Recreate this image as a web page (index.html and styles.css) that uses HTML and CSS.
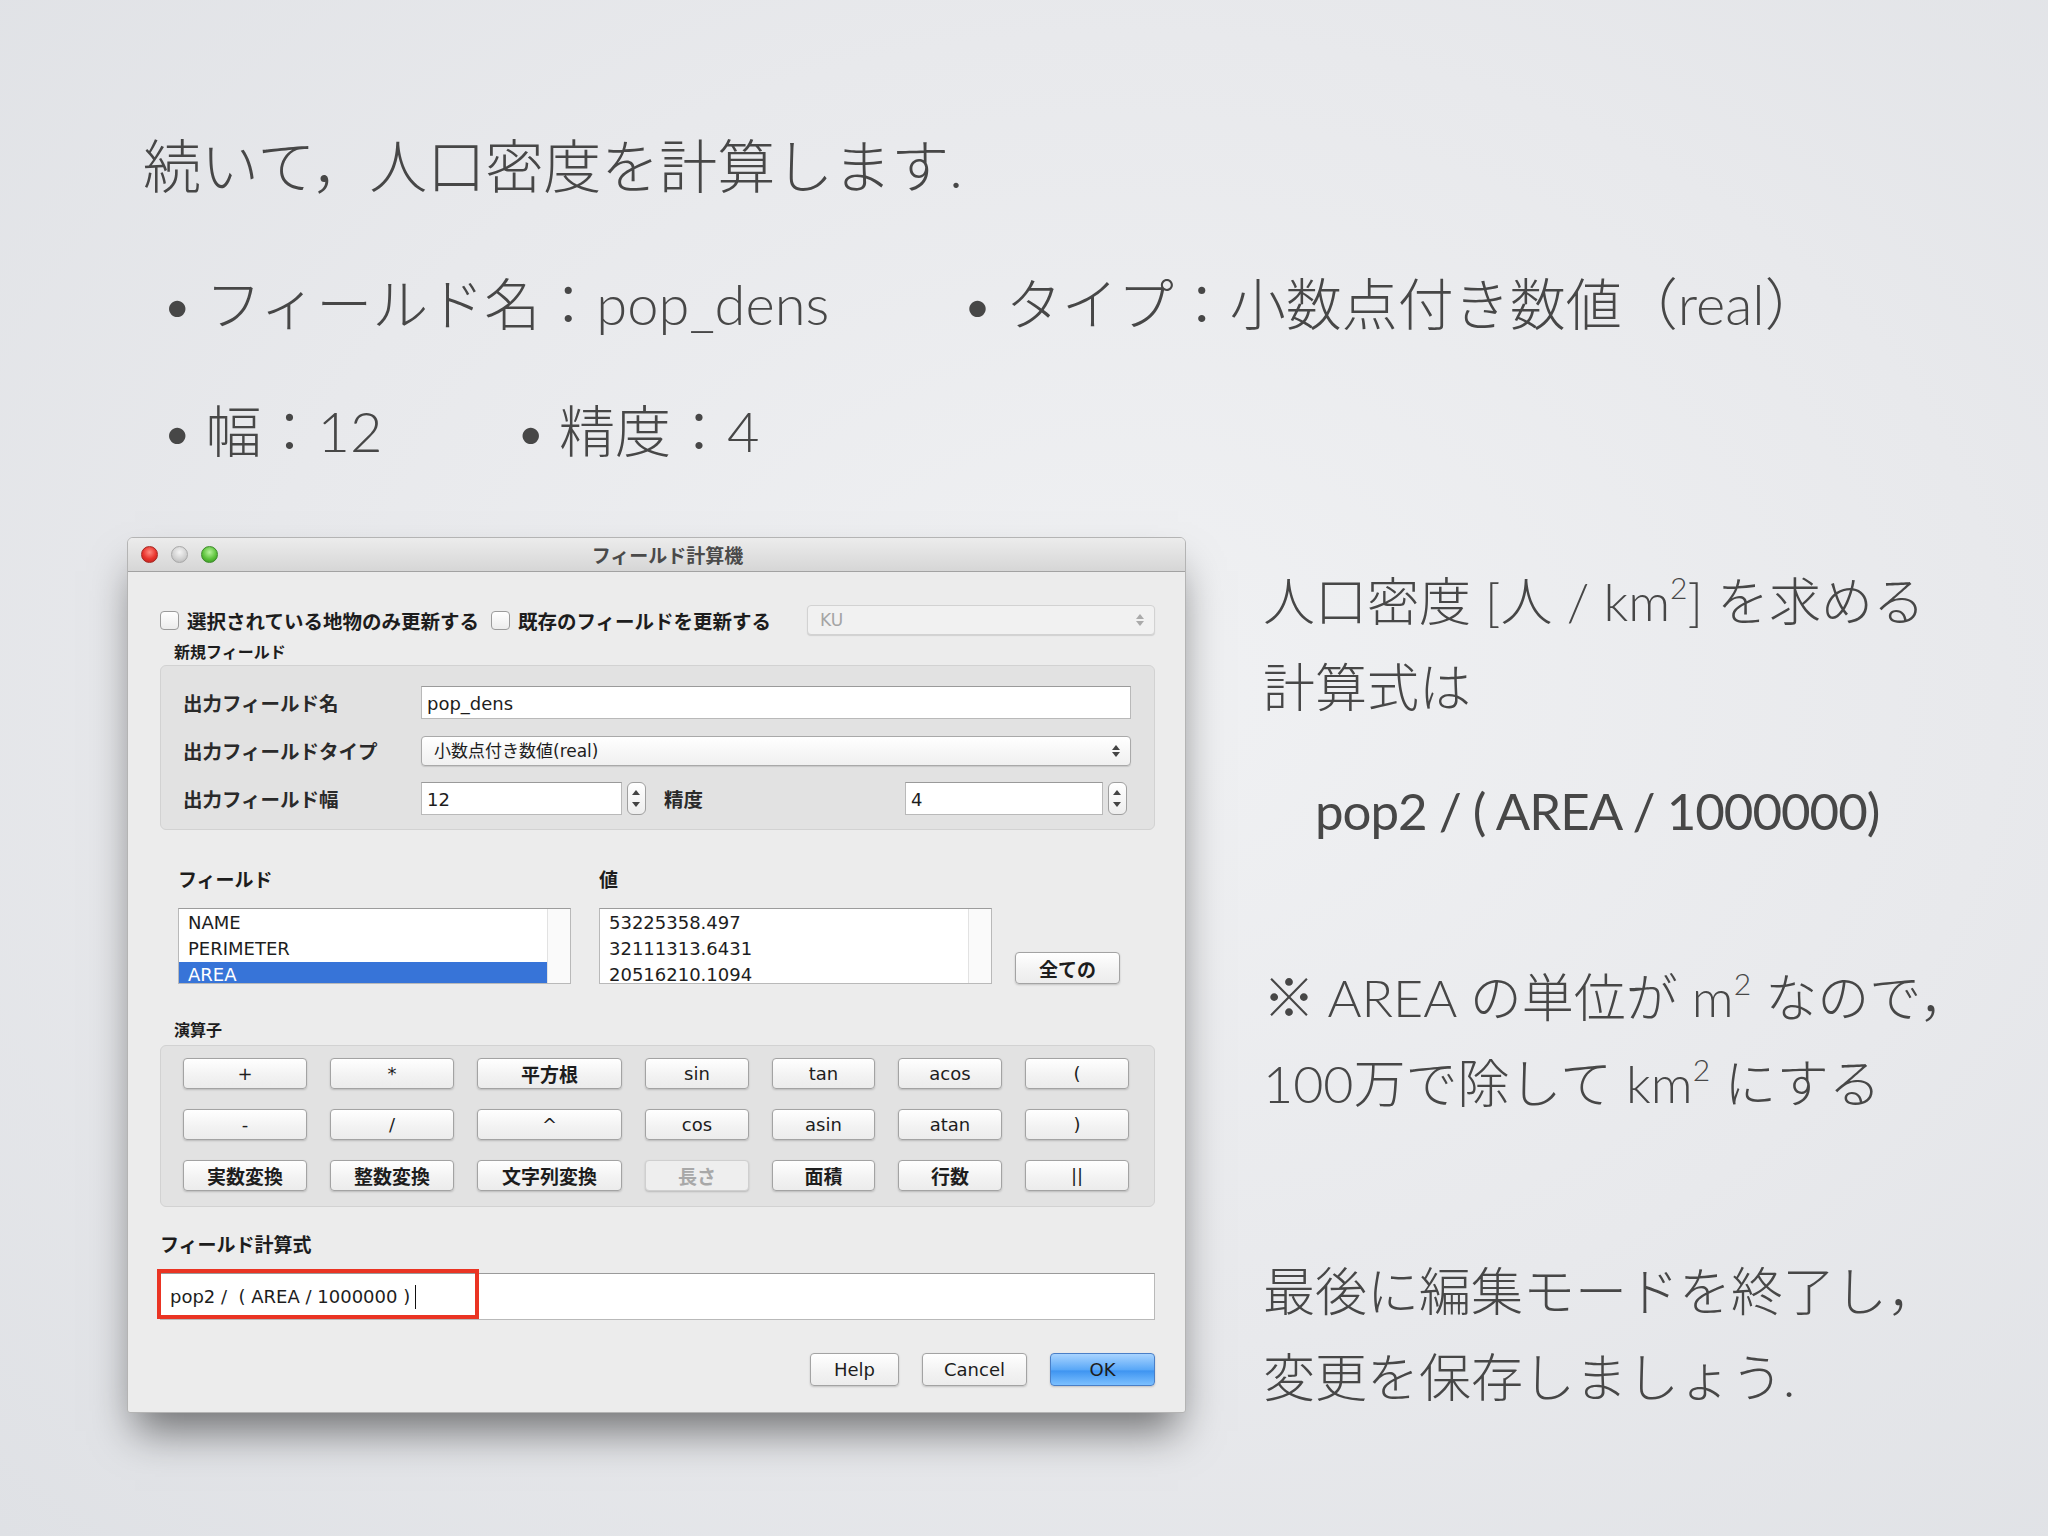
FILE: index.html
```html
<!DOCTYPE html>
<html lang="ja">

<head>
    <meta charset="UTF-8">
    <meta name="viewport" content="width=device-width, initial-scale=1.0">
    <title>フィールド計算機</title>
    <link rel="stylesheet" href="styles.css">
</head>

<body>
    <div class="slide">
        <h1 class="title">続いて，人口密度を計算します.</h1>

        <ul class="points first">
            <li>フィールド名：pop_dens</li>
            <li>タイプ：小数点付き数値（real）</li>
        </ul>
        <ul class="points second">
            <li>幅：12</li>
            <li>精度：4</li>
        </ul>

        <div class="main">
            <!-- dialog -->
            <div class="dialog">
                <div class="titlebar">
                    <div class="lights">
                        <span class="light red"></span>
                        <span class="light gray"></span>
                        <span class="light green"></span>
                    </div>
                    <span class="wintitle">フィールド計算機</span>
                </div>

                <div class="body">
                    <div class="checks">
                        <label class="check"><span class="box"></span>選択されている地物のみ更新する</label>
                        <label class="check"><span class="box"></span>既存のフィールドを更新する</label>
                        <div class="combo disabled">KU<span class="arrows"></span></div>
                    </div>

                    <h6 class="caption">新規フィールド</h6>
                    <div class="group newfield">
                        <div class="row">
                            <span class="lbl">出力フィールド名</span>
                            <div class="input wide">pop_dens</div>
                        </div>
                        <div class="row">
                            <span class="lbl">出力フィールドタイプ</span>
                            <div class="combo wide">小数点付き数値(real)<span class="arrows"></span></div>
                        </div>
                        <div class="row">
                            <span class="lbl">出力フィールド幅</span>
                            <div class="spin">
                                <div class="input">12</div>
                                <span class="stepper"></span>
                            </div>
                            <span class="lbl short">精度</span>
                            <div class="spin right">
                                <div class="input">4</div>
                                <span class="stepper"></span>
                            </div>
                        </div>
                    </div>

                    <div class="lists">
                        <div class="listcol">
                            <h6 class="caption plain">フィールド</h6>
                            <div class="list">
                                <ul>
                                    <li>NAME</li>
                                    <li>PERIMETER</li>
                                    <li class="selected">AREA</li>
                                </ul>
                                <span class="scroll"></span>
                            </div>
                        </div>
                        <div class="listcol">
                            <h6 class="caption plain">値</h6>
                            <div class="list">
                                <ul>
                                    <li>53225358.497</li>
                                    <li>32111313.6431</li>
                                    <li>20516210.1094</li>
                                </ul>
                                <span class="scroll"></span>
                            </div>
                        </div>
                        <button class="btn all jp">全ての</button>
                    </div>

                    <h6 class="caption ops-cap">演算子</h6>
                    <div class="group ops">
                        <button class="btn">+</button>
                        <button class="btn">*</button>
                        <button class="btn jp">平方根</button>
                        <button class="btn">sin</button>
                        <button class="btn">tan</button>
                        <button class="btn">acos</button>
                        <button class="btn">(</button>

                        <button class="btn">-</button>
                        <button class="btn">/</button>
                        <button class="btn">^</button>
                        <button class="btn">cos</button>
                        <button class="btn">asin</button>
                        <button class="btn">atan</button>
                        <button class="btn">)</button>

                        <button class="btn jp">実数変換</button>
                        <button class="btn jp">整数変換</button>
                        <button class="btn jp">文字列変換</button>
                        <button class="btn jp off">長さ</button>
                        <button class="btn jp">面積</button>
                        <button class="btn jp">行数</button>
                        <button class="btn">||</button>
                    </div>

                    <h6 class="caption expr-cap">フィールド計算式</h6>
                    <div class="expr">
                        <span>pop2 /&nbsp; ( AREA / 1000000 )</span><span class="caret"></span>
                        <div class="mark"></div>
                    </div>

                    <div class="actions">
                        <button class="btn">Help</button>
                        <button class="btn">Cancel</button>
                        <button class="btn ok">OK</button>
                    </div>
                </div>
            </div>

            <div class="notes">
                <p>人口密度 [人 / km<sup>2</sup>] を求める</p>
                <p>計算式は</p>
                <p class="formula">pop2 / ( AREA / 1000000)</p>
                <p class="gap1">※ AREA の単位が m<sup>2</sup> なので，</p>
                <p>100万で除して km<sup>2</sup> にする</p>
                <p class="gap2">最後に編集モードを終了し，</p>
                <p>変更を保存しましょう.</p>
            </div>
        </div>
    </div>
</body>

</html>
```

FILE: styles.css
```css
* {
    margin: 0;
    padding: 0;
    list-style: none;
    box-sizing: border-box;
}

body {
    width: 2048px;
    height: 1536px;
    overflow: hidden;
    background: radial-gradient(ellipse at 55% 45%, #f0f1f3 0%, #e8e9ec 55%, #dfe1e5 100%);
    font-family: Lato, "Noto Sans CJK JP", sans-serif;
    font-weight: 300;
    color: #474747;
}

.slide {
    padding: 131px 0 0 127px;
}

.title {
    font-size: 58px;
    font-weight: 300;
    line-height: 70px;
    margin-left: 16px;
}

.points {
    display: flex;
    gap: 132px;
    font-size: 56px;
    line-height: 70px;
    margin-left: 34px;
}

.points li::before {
    content: "•";
    margin-right: 12px;
}

.points.first {
    margin-top: 68px;
}

.points.second {
    margin-top: 57px;
}

.main {
    display: flex;
    align-items: flex-start;
    gap: 77px;
    margin-top: 71px;
}

/* ---------- dialog ---------- */

.dialog {
    width: 1059px;
    height: 876px;
    background-color: #ececec;
    border-radius: 6px 6px 3px 3px;
    border: 1px solid #b4b4b4;
    box-shadow: 0 26px 40px -8px rgba(0, 0, 0, 0.5);
    font-family: "DejaVu Sans", "Noto Sans CJK JP", sans-serif;
    font-weight: 400;
    font-size: 18px;
    color: #1d1d1d;
    overflow: hidden;
}

.titlebar {
    height: 34px;
    background: linear-gradient(#ececec, #d6d6d6);
    border-bottom: 1px solid #a2a2a2;
    display: flex;
    align-items: center;
    position: relative;
}

.lights {
    display: flex;
    gap: 13px;
    padding-left: 13px;
}

.light {
    width: 17px;
    height: 17px;
    border-radius: 50%;
    display: block;
}

.light.red {
    background: radial-gradient(circle at 50% 35%, #ff8a80 0%, #e8312a 55%, #b3221d 100%);
    border: 1px solid #a52620;
}

.light.gray {
    background: radial-gradient(circle at 50% 35%, #f4f4f4 0%, #cfcfcf 60%, #b0b0b0 100%);
    border: 1px solid #a8a8a8;
}

.light.green {
    background: radial-gradient(circle at 50% 35%, #b6f29b 0%, #5cc23a 55%, #2f8c1d 100%);
    border: 1px solid #3c8a2a;
}

.wintitle {
    position: absolute;
    left: 22px;
    right: 0;
    text-align: center;
    font-size: 19px;
    font-weight: 700;
    color: #4a4a4a;
}

.body {
    padding: 0 30px 0 32px;
}

.checks {
    display: flex;
    align-items: center;
    height: 30px;
    margin-top: 33px;
}

.check {
    display: flex;
    align-items: center;
    font-weight: 700;
    font-size: 19.5px;
    margin-right: 12px;
}

.box {
    width: 19px;
    height: 19px;
    border: 1px solid #9b9b9b;
    border-radius: 4px;
    background: linear-gradient(#ffffff, #ececec);
    margin-right: 8px;
    display: block;
}

.combo {
    position: relative;
    height: 30px;
    line-height: 28px;
    padding-left: 12px;
    background: linear-gradient(#ffffff, #f0f0f0);
    border: 1px solid #a9a9a9;
    border-radius: 4px;
    box-shadow: 0 1px 1px rgba(0, 0, 0, 0.12);
    font-size: 17px;
}

.combo.disabled {
    margin-left: auto;
    width: 348px;
    color: #a4a4a4;
    border-color: #d2d2d2;
    background: #f1f1f1;
}

.arrows {
    position: absolute;
    right: 10px;
    top: 8px;
    width: 0;
    height: 12px;
    border-left: 4px solid transparent;
    border-right: 4px solid transparent;
}

.arrows::before,
.arrows::after {
    content: "";
    position: absolute;
    left: -4px;
    border-left: 4px solid transparent;
    border-right: 4px solid transparent;
}

.arrows::before {
    top: 0;
    border-bottom: 5px solid #444;
}

.arrows::after {
    bottom: 0;
    border-top: 5px solid #444;
}

.disabled .arrows::before {
    border-bottom-color: #aaa;
}

.disabled .arrows::after {
    border-top-color: #aaa;
}

.caption {
    font-size: 16px;
    font-weight: 700;
    margin: 6px 0 0 14px;
    line-height: 24px;
}

.caption.plain {
    margin: 0 0 16px 0;
    font-size: 19px;
}

.caption.ops-cap {
    margin-top: 35px;
}

.group {
    background-color: #e2e2e2;
    border: 1px solid #d2d2d2;
    border-radius: 6px;
}

.newfield {
    padding: 20px 23px 14px 22px;
    display: flex;
    flex-direction: column;
    gap: 15px;
}

.row {
    display: flex;
    align-items: center;
    height: 33px;
}

.lbl {
    width: 238px;
    font-weight: 700;
    font-size: 19.5px;
    color: #2a2a2a;
}

.lbl.short {
    width: 241px;
    margin-left: 18px;
}

.input {
    height: 33px;
    line-height: 33px;
    padding-left: 5px;
    background-color: #fff;
    border: 1px solid #b9b9b9;
    border-top-color: #9a9a9a;
    font-size: 18px;
}

.wide {
    flex: 1;
}

.combo.wide {
    height: 30px;
    line-height: 28px;
    padding-left: 12px;
}

.spin {
    display: flex;
    align-items: center;
    gap: 5px;
}

.spin .input {
    width: 201px;
}

.spin.right .input {
    width: 198px;
}

.stepper {
    position: relative;
    width: 19px;
    height: 33px;
    border: 1px solid #9f9f9f;
    border-radius: 6px;
    background: linear-gradient(#ffffff, #eeeeee);
    display: block;
}

.stepper::before,
.stepper::after {
    content: "";
    position: absolute;
    left: 4px;
    border-left: 4px solid transparent;
    border-right: 4px solid transparent;
}

.stepper::before {
    top: 7px;
    border-bottom: 5px solid #444;
}

.stepper::after {
    bottom: 7px;
    border-top: 5px solid #444;
}

.lists {
    display: flex;
    align-items: flex-end;
    gap: 28px;
    margin: 38px 0 0 18px;
}

.list {
    position: relative;
    width: 393px;
    height: 76px;
    background-color: #fff;
    border: 1px solid #b9b9b9;
    border-top-color: #9c9c9c;
    overflow: hidden;
}

.list ul {
    padding-top: 1px;
    margin-right: 23px;
}

.list li {
    line-height: 26px;
    height: 26px;
    padding-left: 9px;
    font-size: 18px;
}

.list li.selected {
    background-color: #3774d8;
    color: #fff;
}

.scroll {
    position: absolute;
    top: 0;
    right: 0;
    width: 23px;
    height: 100%;
    border-left: 1px solid #e2e2e2;
    background-color: #fafafa;
}

.btn {
    font-family: "DejaVu Sans", "Noto Sans CJK JP", sans-serif;
    font-size: 18px;
    color: #1d1d1d;
    height: 31px;
    background: linear-gradient(#ffffff, #f2f2f2 60%, #ececec);
    border: 1px solid #a3a3a3;
    border-radius: 4px;
    box-shadow: 0 1px 2px rgba(0, 0, 0, 0.18);
}

.btn.jp {
    font-weight: 700;
    font-size: 19px;
}

.btn.off {
    color: #a8a8a8;
    border-color: #cfcfcf;
    background: #eeeeee;
}

.btn.all {
    width: 105px;
    height: 32px;
    margin-left: -5px;
}

.ops {
    margin-top: 2px;
    padding: 12px 23px 15px 22px;
    display: grid;
    grid-template-columns: 124px 124px 145px 104px 103px 104px 104px;
    column-gap: 23px;
    row-gap: 20px;
}

.expr-cap {
    margin: 26px 0 16px 0;
    font-size: 19px;
}

.expr {
    position: relative;
    height: 47px;
    background-color: #fff;
    border: 1px solid #b9b9b9;
    border-top-color: #9a9a9a;
    display: flex;
    align-items: center;
    padding-left: 9px;
    font-size: 18px;
}

.caret {
    width: 1px;
    height: 24px;
    background-color: #111;
    margin-left: 5px;
    display: block;
}

.mark {
    position: absolute;
    left: -4px;
    top: -5px;
    width: 322px;
    height: 50px;
    border: 4px solid #ea3423;
}

.actions {
    display: flex;
    justify-content: flex-end;
    gap: 23px;
    margin-top: 33px;
}

.actions .btn {
    height: 33px;
    width: 105px;
}

.actions .btn:first-child {
    width: 89px;
}

.btn.ok {
    background: linear-gradient(#a9d4ff, #5aa8f7 50%, #3f95f1 55%, #7cc0ff);
    border-color: #4a7fc7;
}

/* ---------- notes ---------- */

.notes {
    margin-top: 21px;
    font-size: 52px;
    line-height: 86px;
}

.notes sup {
    font-size: 30px;
    line-height: 0;
    vertical-align: 22px;
}

.notes .formula {
    margin: 38px 0 0 52px;
    font-weight: 400;
    font-size: 51px;
    letter-spacing: -1px;
}

.notes .gap1 {
    margin-top: 100px;
}

.notes .gap2 {
    margin-top: 122px;
}
```
